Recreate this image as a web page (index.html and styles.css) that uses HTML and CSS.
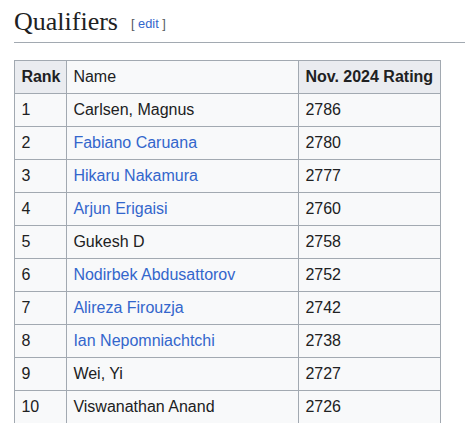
FILE: index.html
```html
<!DOCTYPE html>
<html>
<head>
<meta charset="utf-8">
<link rel="stylesheet" href="styles.css">
</head>
<body>
<div class="page">
  <h2 class="heading"><span class="title">Qualifiers</span><span class="edit"><span class="br">[</span> <a href="#">edit</a> <span class="br">]</span></span></h2>
  <table class="table">
    <colgroup><col class="c1"><col class="c2"><col class="c3"></colgroup>
    <tr><th>Rank</th><td>Name</td><th>Nov. 2024 Rating</th></tr>
    <tr><td>1</td><td>Carlsen, Magnus</td><td>2786</td></tr>
    <tr><td>2</td><td><a href="#">Fabiano Caruana</a></td><td>2780</td></tr>
    <tr><td>3</td><td><a href="#">Hikaru Nakamura</a></td><td>2777</td></tr>
    <tr><td>4</td><td><a href="#">Arjun Erigaisi</a></td><td>2760</td></tr>
    <tr><td>5</td><td>Gukesh D</td><td>2758</td></tr>
    <tr><td>6</td><td><a href="#">Nodirbek Abdusattorov</a></td><td>2752</td></tr>
    <tr><td>7</td><td><a href="#">Alireza Firouzja</a></td><td>2742</td></tr>
    <tr><td>8</td><td><a href="#">Ian Nepomniachtchi</a></td><td>2738</td></tr>
    <tr><td>9</td><td>Wei, Yi</td><td>2727</td></tr>
    <tr><td>10</td><td>Viswanathan Anand</td><td>2726</td></tr>
  </table>
</div>
</body>
</html>
```

FILE: styles.css
```css
html, body { margin: 0; padding: 0; background: #fff; }
body { font-family: "Liberation Sans", Arial, sans-serif; font-size: 16px; color: #202122; }
.page { padding-left: 14px; }
.heading {
  margin: 0;
  padding-top: 4px;
  padding-bottom: 3px;
  height: 35px;
  line-height: 35px;
  font-family: "Liberation Serif", "Times New Roman", serif;
  font-weight: normal;
  font-size: 26px;
  color: #202122;
  border-bottom: 1px solid #a2a9b1;
}
.edit {
  font-family: "Liberation Sans", Arial, sans-serif;
  font-size: 12.8px;
  line-height: 1;
  margin-left: 13px;
  vertical-align: 2px;
  color: #54595d;
}
.edit a { color: #3366cc; text-decoration: none; }
.table {
  margin-top: 17px;
  border-collapse: collapse;
  table-layout: fixed;
  width: 427px;
  background: #f8f9fa;
  border: 1px solid #a2a9b1;
}
.c1 { width: 52px; }
.c2 { width: 232px; }
.c3 { width: 142px; }
.table th, .table td {
  border: 1px solid #a2a9b1;
  padding: 3px 6.4px;
  height: 26px;
  line-height: 26px;
  text-align: left;
  white-space: nowrap;
}
.table th { background: #eaecf0; font-weight: bold; }
.table a { color: #3366cc; text-decoration: none; }
```
